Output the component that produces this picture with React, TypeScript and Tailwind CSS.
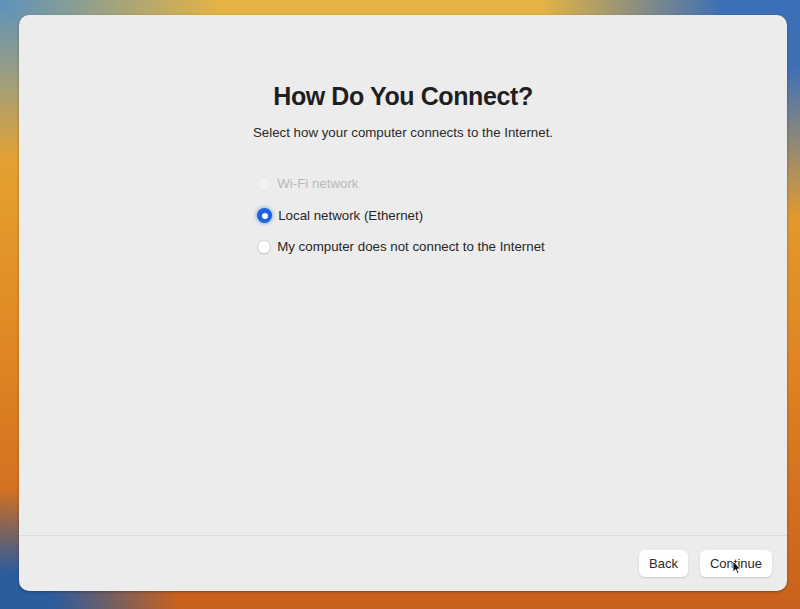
const options = [
  { id: 'wifi', label: 'Wi-Fi network', disabled: true },
  { id: 'ethernet', label: 'Local network (Ethernet)', selected: true },
  { id: 'none', label: 'My computer does not connect to the Internet' },
];

const Radio = ({ selected, disabled }: { selected?: boolean; disabled?: boolean }) => {
  if (selected) {
    return (
      <span className="flex h-[15px] w-[15px] items-center justify-center rounded-full bg-[#1d64de] shadow-[0_0_4px_rgba(29,100,222,0.7)]">
        <span className="h-[6px] w-[6px] rounded-full bg-white" />
      </span>
    );
  }
  return (
    <span
      className={
        disabled
          ? 'h-[14px] w-[14px] rounded-full border border-[#e4e4e4] bg-[#f3f3f3]'
          : 'h-[14px] w-[14px] rounded-full border border-[#d2d2d2] bg-white shadow-[0_1px_1px_rgba(0,0,0,0.08)]'
      }
    />
  );
};

export default function App() {
  return (
    <div className="h-[609px] w-[800px] bg-[radial-gradient(ellipse_220px_160px_at_0%_0%,#5b92bd,transparent),radial-gradient(ellipse_260px_220px_at_100%_0%,#3d6fb7_30%,transparent),radial-gradient(ellipse_180px_120px_at_0%_100%,#2b5c9e_30%,transparent),linear-gradient(180deg,#e4b444_0%,#e39a2c_35%,#df8424_60%,#c9601c_100%)] pb-[18px] pl-[19px] pr-[13px] pt-[15px] font-['Liberation_Sans',Arial,sans-serif]">
      <div className="flex h-full flex-col rounded-[10px] bg-[#ececec] shadow-[0_1px_3px_rgba(0,0,0,0.3)]">
        <div className="flex flex-1 flex-col items-center pt-[65px]">
          <h1 className="text-[25px] font-bold leading-[32px] tracking-[-0.4px] text-[#1f1f1f]">How Do You Connect?</h1>
          <p className="mt-[13px] text-[13.3px] leading-[16px] text-[#2a2a2a]">
            Select how your computer connects to the Internet.
          </p>
          <div className="ml-[-4px] mt-[35px] flex flex-col gap-[15.5px]">
            {options.map((o) => (
              <div key={o.id} className="flex items-center gap-[6px]">
                <Radio selected={o.selected} disabled={o.disabled} />
                <span
                  className={
                    o.disabled
                      ? 'text-[13.3px] leading-[16px] text-[#b9b9b9]'
                      : 'text-[13.3px] leading-[16px] text-[#262626]'
                  }
                >
                  {o.label}
                </span>
              </div>
            ))}
          </div>
        </div>
        <div className="flex h-[56px] items-center justify-end gap-[12px] border-t border-[#dcdcdc] pr-[15px]">
          <button className="h-[27px] rounded-[6px] bg-white px-[10px] text-[13px] text-[#2a2a2a] shadow-[0_1px_2px_rgba(0,0,0,0.15)]">
            Back
          </button>
          <button className="relative h-[27px] rounded-[6px] bg-white px-[10px] text-[13px] text-[#2a2a2a] shadow-[0_1px_2px_rgba(0,0,0,0.15)]">
            Continue
            <svg className="absolute left-[32px] top-[10px]" width="10" height="15" viewBox="0 0 10 15">
              <path d="M1 1 L1 12 L3.6 9.6 L5.4 13.6 L7 12.9 L5.3 9 L8.6 9 Z" fill="#111" stroke="#fff" strokeWidth="0.9" />
            </svg>
          </button>
        </div>
      </div>
    </div>
  );
}
